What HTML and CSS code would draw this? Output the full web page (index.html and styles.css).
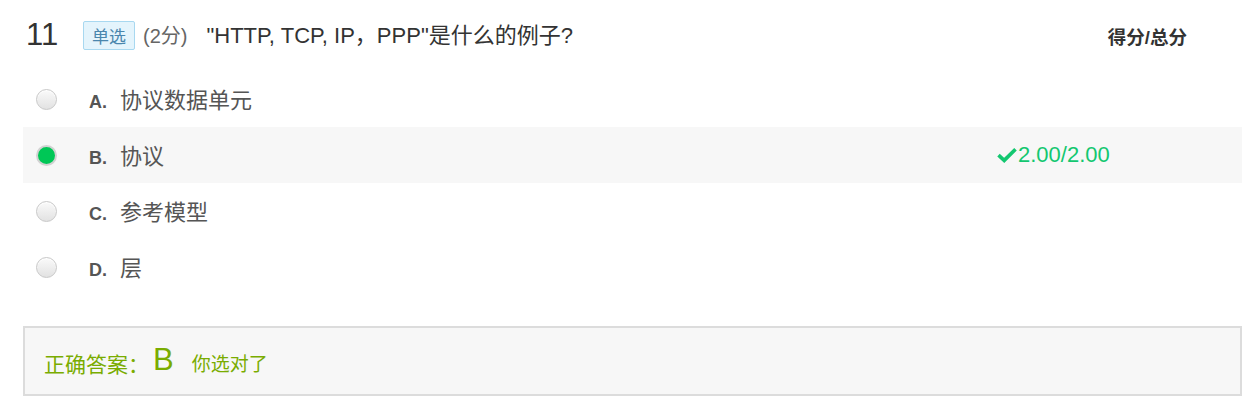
FILE: index.html
```html
<!DOCTYPE html>
<html lang="zh">
<head>
<meta charset="utf-8">
<link rel="stylesheet" href="styles.css">
</head>
<body>
<div class="question">
  <div class="q-head">
    <span class="q-num">11</span>
    <span class="q-type">单选</span>
    <span class="q-score">(2分)</span>
    <span class="q-title">"HTTP, TCP, IP，PPP"是什么的例子?</span>
    <span class="q-total">得分/总分</span>
  </div>
  <ul class="options">
    <li class="option">
      <span class="radio"></span>
      <span class="opt-body"><span class="opt-letter">A.</span><span class="opt-text">协议数据单元</span></span>
    </li>
    <li class="option option-selected">
      <span class="radio radio-on"></span>
      <span class="opt-body"><span class="opt-letter">B.</span><span class="opt-text">协议</span></span>
      <span class="opt-score">
        <svg class="check" viewBox="0 0 20 16" width="20" height="16"><path d="M1.5 8.2 L7.2 13.4 L18.5 2.2" fill="none" stroke="currentColor" stroke-width="3.6" stroke-linejoin="miter"/></svg>2.00/2.00
      </span>
    </li>
    <li class="option">
      <span class="radio"></span>
      <span class="opt-body"><span class="opt-letter">C.</span><span class="opt-text">参考模型</span></span>
    </li>
    <li class="option">
      <span class="radio"></span>
      <span class="opt-body"><span class="opt-letter">D.</span><span class="opt-text">层</span></span>
    </li>
  </ul>
  <div class="answer">
    <span class="ans-label">正确答案：</span>
    <span class="ans-key">B</span>
    <span class="ans-note">你选对了</span>
  </div>
</div>
</body>
</html>
```
FILE: styles.css
```css
* { box-sizing: border-box; }
body {
  margin: 0;
  background: #fff;
  font-family: "Liberation Sans", "Noto Sans CJK SC", sans-serif;
  color: #333;
}
.question {
  padding: 0 17px 0 23px;
}
.q-head {
  display: flex;
  align-items: center;
  height: 71px;
  padding: 0 55px 0 3px;
}
.q-num {
  font-size: 31px;
  color: #333;
  width: 57px;
  line-height: 1;
  margin-top: -2px;
}
.q-type {
  display: inline-flex;
  align-items: center;
  justify-content: center;
  width: 52px;
  height: 29px;
  background: #e4f4fc;
  border: 1px solid #a8d8f0;
  border-radius: 2px;
  color: #4a86ad;
  font-size: 17px;
  margin-top: -1px;
}
.q-score {
  margin-left: 8px;
  font-size: 20px;
  color: #666;
  margin-top: -2px;
}
.q-title {
  margin-left: 19px;
  font-size: 22px;
  color: #333;
  margin-top: -5px;
}
.q-total {
  margin-left: auto;
  font-size: 18.5px;
  font-weight: bold;
  color: #333;
}
.options {
  list-style: none;
  margin: 0;
  padding: 0;
}
.option {
  display: flex;
  align-items: center;
  height: 56px;
  padding-left: 13px;
}
.option-selected {
  background: #f7f7f7;
}
.radio {
  width: 21px;
  height: 21px;
  border-radius: 50%;
  border: 1px solid #c8c8c8;
  background: linear-gradient(#fafafa, #e2e2e2);
  box-shadow: inset 0 1px 1px #fff;
}
.radio-on {
  background: #00c756;
  border: 2px solid #d2d2d2;
  box-shadow: none;
}
.opt-body {
  flex: 1;
  display: flex;
  align-items: baseline;
  margin-left: 32px;
  margin-top: -3px;
}
.opt-letter {
  font-weight: bold;
  font-size: 18px;
  color: #555;
  width: 31px;
}
.opt-text {
  font-size: 22px;
  color: #555;
}
.opt-score {
  width: 245px;
  display: flex;
  align-items: center;
  font-size: 22px;
  color: #13c770;
}
.check {
  margin-right: 1px;
}
.answer {
  margin-top: 31px;
  height: 70px;
  border: 2px solid #dcdcdc;
  background: #f7f7f7;
  display: flex;
  align-items: center;
  padding: 3px 0 0 19px;
  color: #7aac00;
}
.ans-label {
  font-size: 21px;
}
.ans-key {
  font-size: 31px;
  margin-left: 4px;
  margin-top: -6px;
}
.ans-note {
  font-size: 19px;
  margin-left: 18px;
}
```
